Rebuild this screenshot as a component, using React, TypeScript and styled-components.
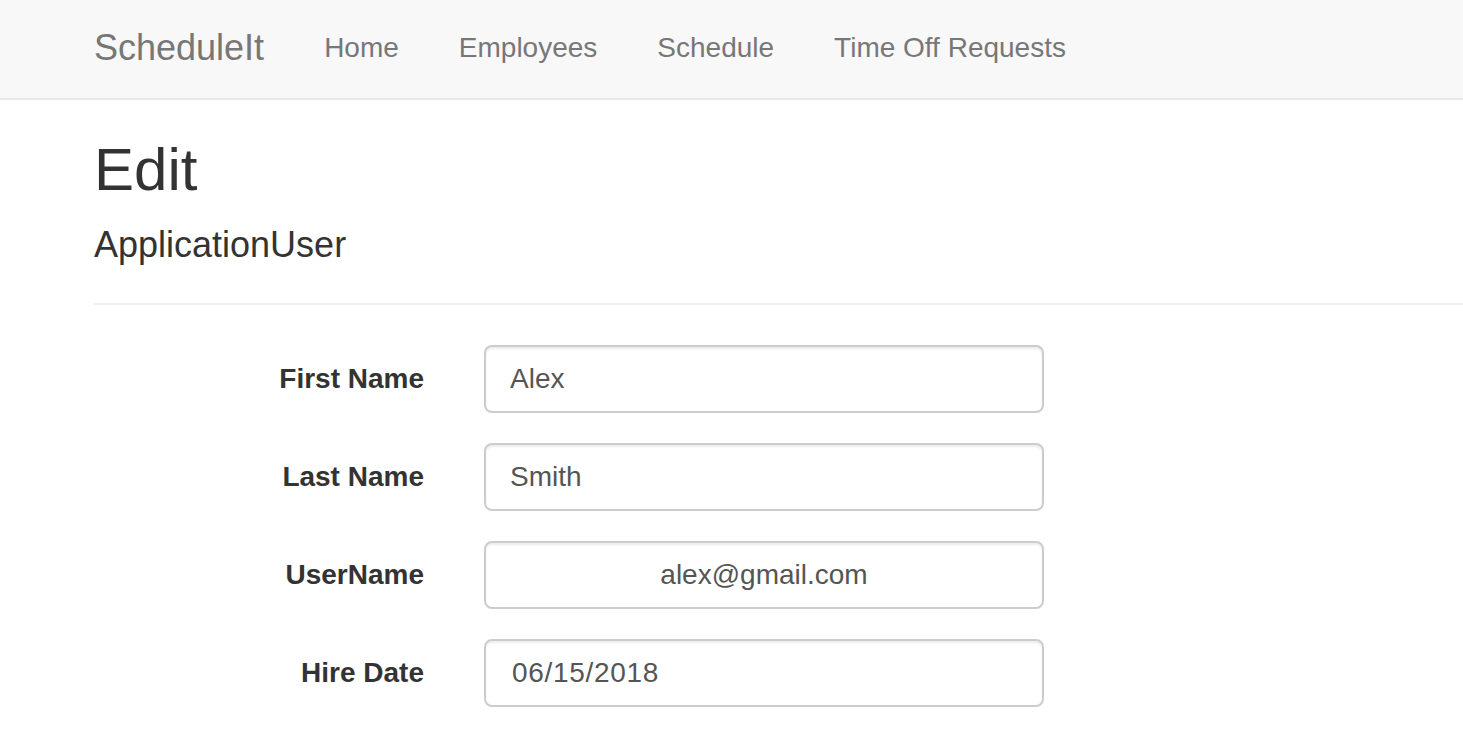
import React from "react";
import styled, { createGlobalStyle } from "styled-components";

const Global = createGlobalStyle`
  html, body { margin: 0; padding: 0; background: #fff; overflow-x: hidden; }
  body {
    font-family: "Liberation Sans", Arial, Helvetica, sans-serif;
    font-size: 28px;
    line-height: 1.42857;
    color: #333;
  }
  * { box-sizing: border-box; }
`;

const Navbar = styled.nav`
  height: 100px;
  background: #f8f8f8;
  border-bottom: 2px solid #e7e7e7;
  display: flex;
  align-items: flex-start;
  padding-left: 64px;
`;

const Brand = styled.a`
  display: block;
  padding: 28px 30px 30px;
  font-size: 36px;
  line-height: 40px;
  color: #777;
  text-decoration: none;
`;

const NavList = styled.ul`
  list-style: none;
  margin: 0;
  padding: 0;
  display: flex;
`;

const NavLink = styled.a`
  display: block;
  padding: 28px 30px 30px;
  font-size: 28px;
  line-height: 40px;
  color: #777;
  text-decoration: none;
`;

const Main = styled.main`
  padding: 37px 0 0 94px;
`;

const Title = styled.h2`
  margin: 0;
  font-size: 60px;
  font-weight: 500;
  line-height: 1.1;
  color: #333;
`;

const Subtitle = styled.h4`
  margin: 22px 0 0;
  font-size: 36px;
  font-weight: 500;
  line-height: 1.1;
  color: #333;
`;

const Rule = styled.hr`
  margin: 38px 0 40px;
  border: 0;
  border-top: 2px solid #eee;
  height: 0;
`;

const Form = styled.form`
  display: flex;
  flex-direction: column;
  gap: 30px;
`;

const Group = styled.div`
  display: flex;
  align-items: flex-start;
  gap: 60px;
`;

const Label = styled.label`
  width: 330px;
  padding-top: 14px;
  text-align: right;
  font-weight: 700;
  font-size: 28px;
  line-height: 40px;
  color: #333;
`;

const Input = styled.input<{ $center?: boolean; $date?: boolean }>`
  width: 560px;
  height: 68px;
  padding: 12px ${(p) => (p.$date ? "22px 12px 26px" : "24px")};
  font-family: inherit;
  font-size: 28px;
  line-height: 40px;
  letter-spacing: ${(p) => (p.$date ? "0.7px" : "normal")};
  color: #555;
  background: #fff;
  border: 2px solid #ccc;
  border-radius: 8px;
  box-shadow: inset 0 2px 2px rgba(0, 0, 0, 0.075);
  text-align: ${(p) => (p.$center ? "center" : "left")};
  outline: none;
`;

const fields = [
  { label: "First Name", value: "Alex" },
  { label: "Last Name", value: "Smith" },
  { label: "UserName", value: "alex@gmail.com", center: true },
  { label: "Hire Date", value: "06/15/2018", date: true },
];

export default function App() {
  return (
    <>
      <Global />
      <Navbar>
        <Brand href="#">ScheduleIt</Brand>
        <NavList>
          {["Home", "Employees", "Schedule", "Time Off Requests"].map((t) => (
            <li key={t}>
              <NavLink href="#">{t}</NavLink>
            </li>
          ))}
        </NavList>
      </Navbar>
      <Main>
        <Title>Edit</Title>
        <Subtitle>ApplicationUser</Subtitle>
        <Rule />
        <Form>
          {fields.map((f) => (
            <Group key={f.label}>
              <Label>{f.label}</Label>
              <Input
                type="text"
                defaultValue={f.value}
                $center={f.center}
                $date={f.date}
              />
            </Group>
          ))}
        </Form>
      </Main>
    </>
  );
}
